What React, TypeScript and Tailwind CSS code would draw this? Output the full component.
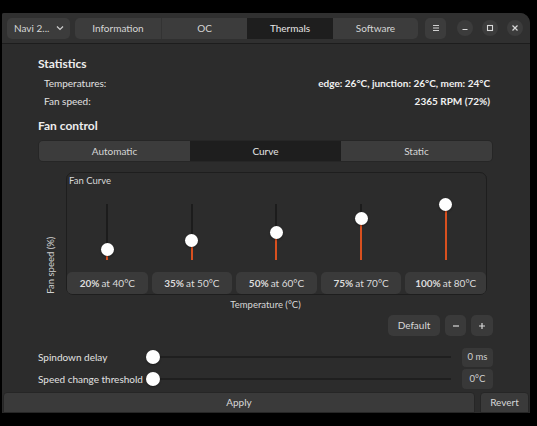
import React from "react";

const font = { fontFamily: 'Lato, "Noto Sans", sans-serif' };

const points = [
  { speed: 20, temp: 40 },
  { speed: 35, temp: 50 },
  { speed: 50, temp: 60 },
  { speed: 75, temp: 70 },
  { speed: 100, temp: 80 },
];

const TRACK = 56;

function VSlider({ value }: { value: number }) {
  const filled = Math.round((TRACK * value) / 100);
  return (
    <div className="relative mx-auto w-[13px] h-[56px]">
      <div className="absolute left-[5.5px] top-0 w-[2px] h-full bg-[#1c1c1c]" />
      <div
        className="absolute left-[5.5px] bottom-0 w-[2px] bg-[#d9501f]"
        style={{ height: filled }}
      />
      <div
        className="absolute left-0 w-[13px] h-[13px] rounded-full bg-white shadow-[0_1px_2px_rgba(0,0,0,0.4)]"
        style={{ bottom: filled - 6.5 }}
      />
    </div>
  );
}

function HSlider() {
  return (
    <div className="relative flex-1 h-[14px] flex items-center">
      <div className="absolute left-[6px] right-0 h-[2px] bg-[#1f1f1f]" />
      <div className="relative w-[14px] h-[14px] rounded-full bg-white shadow-[0_1px_2px_rgba(0,0,0,0.4)]" />
    </div>
  );
}

export default function App() {
  return (
    <div className="w-[537px] h-[426px] bg-black pt-[13px] text-[10px] text-[#e2e2e2]" style={font}>
      <div className="ml-[2px] w-[528px] h-[400px] bg-[#2c2c2c] rounded-tr-[10px] rounded-tl-[2px] flex flex-col overflow-hidden">
        {/* Header */}
        <div className="h-[31px] shrink-0 bg-[#303030] border-b border-[#1d1d1d] flex items-center pl-[5px] pr-[7px]">
          <button className="w-[63px] h-[21px] rounded-[5px] bg-[#3c3c3c] flex items-center justify-between pl-[7px] pr-[6px] text-[#d6d6d6]">
            <span>Navi 2...</span>
            <svg width="8" height="8" viewBox="0 0 8 8">
              <path d="M1 2.5 L4 5.5 L7 2.5" fill="none" stroke="#cfcfcf" strokeWidth="1.2" />
            </svg>
          </button>
          <div className="ml-[5px] flex h-[21px] rounded-[5px] overflow-hidden">
            <div className="w-[86px] bg-[#3c3c3c] flex items-center justify-center text-[#d6d6d6]">Information</div>
            <div className="w-[86px] bg-[#3c3c3c] border-l border-[#333] flex items-center justify-center text-[#d6d6d6]">OC</div>
            <div className="w-[86px] bg-[#1e1e1e] flex items-center justify-center text-[#e6e6e6]">Thermals</div>
            <div className="w-[85px] bg-[#3c3c3c] flex items-center justify-center text-[#d6d6d6]">Software</div>
          </div>
          <button className="ml-[7px] w-[21px] h-[21px] rounded-[5px] bg-[#3c3c3c] flex items-center justify-center">
            <svg width="10" height="10" viewBox="0 0 10 10">
              <path d="M2 2.5h6M2 5h6M2 7.5h6" stroke="#d0d0d0" strokeWidth="1.1" />
            </svg>
          </button>
          <div className="ml-auto flex items-center gap-[9px]">
            <div className="w-[16px] h-[16px] rounded-full bg-[#3c3c3c] flex items-center justify-center">
              <svg width="8" height="8" viewBox="0 0 8 8">
                <path d="M1.5 5.5h5" stroke="#d8d8d8" strokeWidth="1.2" />
              </svg>
            </div>
            <div className="w-[16px] h-[16px] rounded-full bg-[#3c3c3c] flex items-center justify-center">
              <svg width="8" height="8" viewBox="0 0 8 8">
                <rect x="1.5" y="1.5" width="5" height="5" fill="none" stroke="#d8d8d8" strokeWidth="1.1" />
              </svg>
            </div>
            <div className="w-[16px] h-[16px] rounded-full bg-[#3c3c3c] flex items-center justify-center">
              <svg width="8" height="8" viewBox="0 0 8 8">
                <path d="M1.5 1.5l5 5M6.5 1.5l-5 5" stroke="#d8d8d8" strokeWidth="1.2" />
              </svg>
            </div>
          </div>
        </div>

        {/* Content */}
        <div className="flex-1 flex flex-col pl-[36px] pr-[37px]">
          <div className="mt-[12px] h-[16px] flex items-center font-bold text-[12px] text-[#eeeeee]">Statistics</div>
          <div className="mt-[3px] h-[16px] flex items-center justify-between pl-[6px] pr-[3px]">
            <span>Temperatures:</span>
            <span className="font-bold text-[#f0f0f0]">edge: 26°C, junction: 26°C, mem: 24°C</span>
          </div>
          <div className="mt-[2px] h-[16px] flex items-center justify-between pl-[6px] pr-[3px]">
            <span>Fan speed:</span>
            <span className="font-bold text-[#f0f0f0]">2365 RPM (72%)</span>
          </div>
          <div className="mt-[9px] h-[16px] flex items-center font-bold text-[12px] text-[#eeeeee]">Fan control</div>

          <div className="mt-[6px] h-[22px] flex rounded-[5px] overflow-hidden border border-[#262626]">
            <div className="flex-1 bg-[#3c3c3c] flex items-center justify-center text-[#d6d6d6]">Automatic</div>
            <div className="flex-1 bg-[#1e1e1e] flex items-center justify-center text-[#e6e6e6]">Curve</div>
            <div className="flex-1 bg-[#3c3c3c] flex items-center justify-center text-[#d6d6d6]">Static</div>
          </div>

          {/* Fan curve */}
          <div className="mt-[10px] flex">
            <div className="w-[28px] flex items-end justify-center pb-[1px]">
              <div className="h-[58px] w-[14px] flex items-center justify-center">
                <span className="block whitespace-nowrap -rotate-90 text-[9.5px] text-[#d0d0d0]">Fan speed (%)</span>
              </div>
            </div>
            <div className="w-[421px] h-[123px] rounded-[7px] border border-[#1e1e1e] flex flex-col">
              <div className="pl-[2px] pt-[1px] h-[14px] text-[9.5px] leading-[14px] text-[#d8d8d8]">Fan Curve</div>
              <div className="mt-[17px] grid grid-cols-5 gap-[4px]">
                {points.map((p) => (
                  <VSlider key={p.temp} value={p.speed} />
                ))}
              </div>
              <div className="mt-auto grid grid-cols-5 gap-[4px]">
                {points.map((p) => (
                  <div
                    key={p.temp}
                    className="h-[22px] rounded-[5px] bg-[#3a3a3a] flex items-center justify-center text-[#dcdcdc]"
                  >
                    <span className="font-bold">{p.speed}%</span>
                    <span className="ml-[2px]">at {p.temp}°C</span>
                  </div>
                ))}
              </div>
            </div>
          </div>

          <div className="mt-[3px] h-[14px] flex items-center justify-center text-[9.5px] text-[#d8d8d8]">Temperature (°C)</div>

          <div className="mt-[3px] flex justify-end gap-[5px]">
            <button className="w-[52px] h-[21px] rounded-[5px] bg-[#3a3a3a] text-[#d8d8d8]">Default</button>
            <button className="w-[21px] h-[21px] rounded-[5px] bg-[#3a3a3a] flex items-center justify-center">
              <svg width="10" height="10" viewBox="0 0 10 10">
                <path d="M2 5h6" stroke="#d8d8d8" strokeWidth="1.2" />
              </svg>
            </button>
            <button className="w-[22px] h-[21px] rounded-[5px] bg-[#3a3a3a] flex items-center justify-center">
              <svg width="10" height="10" viewBox="0 0 10 10">
                <path d="M2 5h6M5 2v6" stroke="#d8d8d8" strokeWidth="1.2" />
              </svg>
            </button>
          </div>

          <div className="mt-[11px] h-[20px] flex items-center">
            <span className="w-[108px]">Spindown delay</span>
            <HSlider />
            <div className="ml-[11px] w-[31px] h-[19px] rounded-[4px] bg-[#383838] flex items-center justify-center text-[9.5px] text-[#d0d0d0]">0 ms</div>
          </div>
          <div className="mt-[2px] h-[20px] flex items-center">
            <span className="w-[108px] whitespace-nowrap">Speed change threshold</span>
            <HSlider />
            <div className="ml-[11px] w-[31px] h-[20px] rounded-[4px] bg-[#383838] flex items-center justify-center text-[9.5px] text-[#d0d0d0]">0°C</div>
          </div>
        </div>

        {/* Footer */}
        <div className="h-[21px] shrink-0 mb-0 flex gap-[5px] pl-[1px] pr-[1px]">
          <button className="w-[472px] h-[21px] rounded-t-[4px] bg-[#3a3a3a] border border-[#262626] text-[#d8d8d8]">Apply</button>
          <button className="flex-1 h-[21px] rounded-t-[4px] bg-[#3a3a3a] border border-[#262626] text-[#d8d8d8]">Revert</button>
        </div>
      </div>
    </div>
  );
}
